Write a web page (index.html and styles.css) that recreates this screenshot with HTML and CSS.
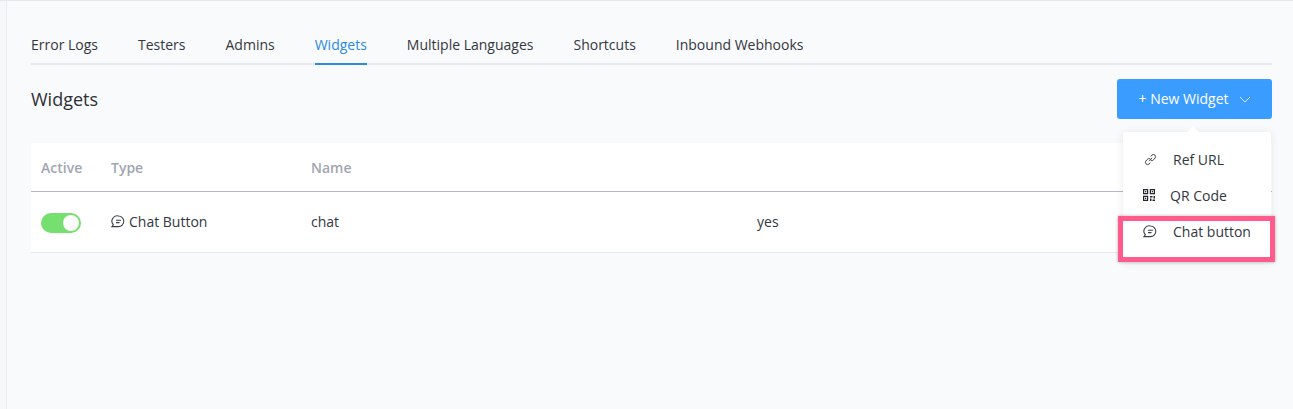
FILE: index.html
```html
<!DOCTYPE html>
<html lang="en">
<head>
<meta charset="utf-8">
<title>Widgets</title>
<link rel="stylesheet" href="styles.css">
</head>
<body>
<div class="side"></div>
<main class="main">
  <nav class="tabs">
    <a class="tab">Error Logs</a>
    <a class="tab">Testers</a>
    <a class="tab">Admins</a>
    <a class="tab active">Widgets</a>
    <a class="tab">Multiple Languages</a>
    <a class="tab">Shortcuts</a>
    <a class="tab">Inbound Webhooks</a>
  </nav>
  <header class="head">
    <h1 class="title">Widgets</h1>
    <div class="menu-wrap">
      <button class="btn">+ New Widget
        <svg class="chev" width="12" height="7" viewBox="0 0 12 7"><path d="M1 1l5 5 5-5" fill="none" stroke="#cfe6ff" stroke-width="1"/></svg>
      </button>
      <div class="menu">
        <div class="caret"></div>
        <div class="item item-ref">
          <svg class="ico" width="13" height="13" viewBox="0 0 13 13" fill="none" stroke="#3a3f47" stroke-width="1"><path d="M5.200 8.200l2.800-3.400"/><path d="M6.800 3.400l1.300-1.500a2.200 2.200 0 0 1 3.100 3l-1.500 1.800a2.200 2.200 0 0 1-2.700.6"/><path d="M6.200 9.700l-1.300 1.500a2.200 2.200 0 0 1-3.100-3l1.500-1.800a2.200 2.200 0 0 1 2.700-.6"/></svg>
          <span>Ref URL</span>
        </div>
        <div class="item item-qr">
          <svg class="ico" width="12" height="12" viewBox="0 0 12 12" fill="none" stroke="#22262c" stroke-width="1.200"><path d="M.6.600h4v4h-4zM7.400.600h4v4h-4zM.6 7.400h4v4h-4z"/><path d="M2 2h1.200v1.200H2zM8.800 2H10v1.200H8.800zM2 8.800h1.200V10H2z" fill="#22262c" stroke="none"/><path d="M7 7h2.500v1.500H7zM10.500 7H12v2.500h-1.500zM7 9.500h1.500V12H7zM9.500 10.500H12V12H9.500z" fill="#22262c" stroke="none"/></svg>
          <span>QR Code</span>
        </div>
        <div class="item item-chat">
          <svg class="ico" width="14" height="13" viewBox="0 0 14 13" fill="none" stroke="#3a3f47" stroke-width="1.100"><path d="M7.500 1a5.300 5.300 0 0 1 0 10.600H1l1.300-1.900A5.300 5.300 0 0 1 7.500 1z"/><path d="M5 5.200h5M5 7.600h3.500"/></svg>
          <span>Chat button</span>
        </div>
        <div class="highlight"></div>
      </div>
    </div>
  </header>
  <section class="table">
    <div class="row row-head">
      <div class="c-active">Active</div>
      <div class="c-type">Type</div>
      <div class="c-name">Name</div>
    </div>
    <div class="row row-body">
      <div class="c-active"><span class="switch"><span class="knob"></span></span></div>
      <div class="c-type">
        <svg class="ico-type" width="14" height="13" viewBox="0 0 14 13" fill="none" stroke="#3a3f47" stroke-width="1.100"><path d="M7.500 1a5.300 5.300 0 0 1 0 10.600H1l1.300-1.900A5.300 5.300 0 0 1 7.500 1z"/><path d="M5 5.200h5M5 7.600h3.500"/></svg>
        Chat Button
      </div>
      <div class="c-name">chat</div>
      <div class="c-extra">yes</div>
    </div>
  </section>
</main>
</body>
</html>
```
FILE: styles.css
```css
* { box-sizing: border-box; }
html, body { margin: 0; height: 100%; }
body {
  display: flex;
  height: 409px;
  overflow: hidden;
  background: #f9fafc;
  border-top: 1px solid #e6e8ee;
  font-family: "Open Sans", "Noto Sans", sans-serif;
  font-size: 14px;
  color: #33373e;
}
.side { width: 7px; flex: none; background: #f6f7f9; border-right: 1px solid #e9ebf0; }
.main { flex: 1; padding: 27px 21px 0 24px; min-width: 0; }
.tabs { display: flex; gap: 40px; height: 37px; border-bottom: 2px solid #e6e9ef; }
.tab { height: 37px; line-height: 33px; white-space: nowrap; color: #33373e; }
.tab.active { color: #2b8be6; border-bottom: 2px solid #2b8be6; }
.head { display: flex; justify-content: space-between; align-items: flex-start; padding-top: 14px; height: 78px; }
.title { margin: 0; font-size: 18px; font-weight: 400; line-height: 40px; color: #2c3037; }
.menu-wrap { position: relative; z-index: 2; }
.btn {
  width: 155px; height: 40px; border: 0; border-radius: 3px;
  background: #3b9cff; color: #fff;
  font: 500 14px "Open Sans", sans-serif;
  display: flex; align-items: center; justify-content: center; gap: 10px; padding: 0 0 2px;
}
.chev { margin-top: 2px; }
.menu {
  position: absolute; top: 53px; right: 1px; width: 148px; height: 130px;
  background: #fff; border-radius: 3px;
  box-shadow: 0 1px 8px rgba(40,50,70,.1);
}
.caret {
  position: absolute; top: -4px; left: 66px; width: 8px; height: 8px;
  background: #fff; transform: rotate(45deg);
}
.item { position: absolute; display: flex; align-items: center; white-space: nowrap; height: 20px; }
.item-ref { top: 17px; left: 21px; gap: 16px; }
.item-qr { top: 53px; left: 20px; gap: 15px; }
.item-chat { top: 89px; left: 20px; gap: 16px; }
.highlight {
  position: absolute; left: -5px; top: 84px; width: 157px; height: 46px;
  border: 5px solid #ff5c8d; box-shadow: 0 0 3px rgba(0,0,0,.3);
}
.table { background: #fff; }
.row { display: flex; align-items: center; }
.row-head { height: 49px; border-bottom: 1px solid #b4b8c0; font-weight: 600; color: #a1a6b2; }
.row-body { height: 61px; padding-bottom: 2px; border-bottom: 1px solid #e6e8ee; }
.c-active { width: 80px; padding-left: 10px; flex: none; }
.c-type { width: 200px; flex: none; display: flex; align-items: center; gap: 4px; }
.c-name { width: 446px; flex: none; }
.switch { display: block; width: 40px; height: 20px; margin-top: 4px; border-radius: 10px; background: #75e070; position: relative; }
.knob { position: absolute; right: 2px; top: 2px; width: 16px; height: 16px; border-radius: 50%; background: #fff; }
```
